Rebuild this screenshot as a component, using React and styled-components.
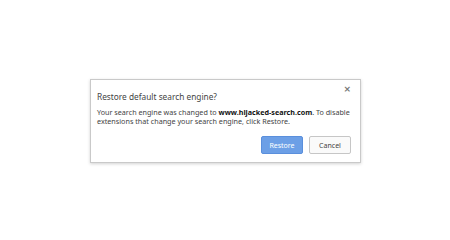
import React from "react";
import styled, { createGlobalStyle } from "styled-components";

const GlobalStyle = createGlobalStyle`
  html, body {
    margin: 0;
    padding: 0;
    background: #ffffff;
  }
  body {
    font-family: "Noto Sans", "Open Sans", Arial, sans-serif;
  }
`;

export default function App() {
  return (
    <>
      <GlobalStyle />
      <Page>
        <Dialog>
          <Header>
            <Title>Restore default search engine?</Title>
            <Close>×</Close>
          </Header>
          <Body>
            Your search engine was changed to <b>www.hijacked-search.com</b>. To disable
            extensions that change your search engine, click Restore.
          </Body>
          <Footer>
            <Button primary>Restore</Button>
            <Button>Cancel</Button>
          </Footer>
        </Dialog>
      </Page>
    </>
  );
}

const Page = styled.div`
  width: 450px;
  height: 240px;
  box-sizing: border-box;
  padding: 79px 0 0 90px;
`;

const Dialog = styled.div`
  width: 271px;
  height: 84px;
  box-sizing: border-box;
  background: #fff;
  border: 1px solid #c9c9c9;
  box-shadow: 0 1px 3px rgba(0, 0, 0, 0.18);
  padding: 5px 9px 0 6px;
  display: flex;
  flex-direction: column;
`;

const Header = styled.div`
  display: flex;
  justify-content: space-between;
  align-items: flex-start;
`;

const Title = styled.div`
  font-size: 8.3px;
  color: #444;
  margin-top: 6px;
`;

const Close = styled.div`
  font-family: "DejaVu Sans", sans-serif;
  font-size: 9px;
  font-weight: bold;
  color: #777;
  line-height: 9px;
`;

const Body = styled.p`
  margin: 6px 0 0 0;
  font-size: 7.2px;
  line-height: 8.5px;
  color: #444;
  b {
    color: #111;
  }
`;

const Footer = styled.div`
  display: flex;
  justify-content: flex-end;
  gap: 6px;
  margin-top: 11px;
`;

const Button = styled.button`
  width: 42px;
  height: 18px;
  padding: 0;
  font-family: "Noto Sans", "Open Sans", Arial, sans-serif;
  font-size: 7px;
  border-radius: 2px;
  background: ${(props) => (props.primary ? "#6c9fe6" : "#fafafa")};
  color: ${(props) => (props.primary ? "#fff" : "#444")};
  border: 1px solid ${(props) => (props.primary ? "#5a8fdc" : "#c6c6c6")};
`;
